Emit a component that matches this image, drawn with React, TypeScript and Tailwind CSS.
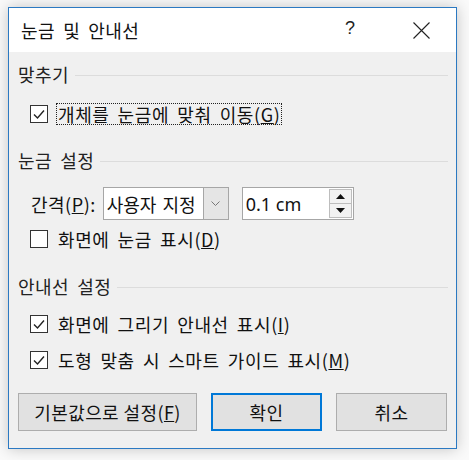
import React from "react";

const font = { fontFamily: '"Noto Sans CJK KR", "Noto Sans", sans-serif' };

function Check({ checked }: { checked: boolean }) {
  return (
    <div className="w-[18px] h-[18px] border border-[#333333] bg-white flex items-center justify-center shrink-0">
      {checked && (
        <svg width="14" height="14" viewBox="0 0 14 14">
          <path d="M2 7.5 L5.5 11 L12 3.5" fill="none" stroke="#222" strokeWidth="1.4" />
        </svg>
      )}
    </div>
  );
}

function Section({ title }: { title: string }) {
  return (
    <div className="flex items-center h-[24px] pl-[9px] pr-[8px]">
      <span className="text-[18px] text-[#222] whitespace-nowrap leading-none tracking-[0.5px]">{title}</span>
      <div className="flex-1 h-px bg-[#dcdcdc] ml-[6px] mt-[2px]" />
    </div>
  );
}

function CheckRow({ checked, text, acc, focus }: { checked: boolean; text: string; acc: string; focus?: boolean }) {
  return (
    <div className="flex items-center h-[24px] pl-[21px]">
      <Check checked={checked} />
      <span
        className={
          "ml-[8px] text-[18px] text-[#111] leading-none whitespace-nowrap tracking-[0.6px] px-[1px] py-[1px] " +
          (focus ? "border border-dotted border-[#222]" : "border border-transparent")
        }
      >
        {text}(<span className="underline">{acc}</span>)
      </span>
    </div>
  );
}

export default function App() {
  return (
    <div className="w-[469px] h-[460px] bg-[#fafafa] relative [word-spacing:3.5px]" style={font}>
      <div className="absolute left-[8px] top-[7px] w-[449px] h-[442px] border border-[#2b79c2] bg-[#f0f0f0] shadow-[0_0_14px_rgba(0,0,0,0.22)] flex flex-col">
        <div className="h-[44px] bg-white flex items-center relative shrink-0">
          <span className="ml-[12px] text-[18px] text-[#111] leading-none tracking-[0.5px]">눈금 및 안내선</span>
          <span className="absolute left-[336px] top-[11px] text-[18px] text-[#222] leading-none" style={{ fontFamily: '"Liberation Sans", sans-serif' }}>?</span>
          <svg className="absolute left-[404px] top-[14px]" width="17" height="17" viewBox="0 0 17 17">
            <path d="M0.5 0.5 L16.5 16.5 M16.5 0.5 L0.5 16.5" stroke="#222" strokeWidth="1.1" fill="none" />
          </svg>
        </div>
        <div className="mt-[10px]">
          <Section title="맞추기" />
        </div>
        <div className="mt-[16px]">
          <CheckRow checked text="개체를 눈금에 맞춰 이동" acc="G" focus />
        </div>
        <div className="mt-[22px]">
          <Section title="눈금 설정" />
        </div>
        <div className="mt-[15px] flex items-center h-[33px] pl-[22px]">
          <span className="text-[18px] text-[#111] leading-none whitespace-nowrap tracking-[0.5px]">
            간격(<span className="underline">P</span>):
          </span>
          <div className="ml-[7px] w-[126px] h-[33px] border border-[#a6a6a6] bg-white flex items-center">
            <span className="pl-[3px] text-[18px] text-[#111] leading-none whitespace-nowrap flex-1 [word-spacing:2px]">사용자 지정</span>
            <div className="w-[25px] h-full bg-[#e5e5e5] border-l border-[#a6a6a6] flex items-center justify-center shrink-0">
              <svg width="9" height="6" viewBox="0 0 9 6">
                <path d="M0.5 0.5 L4.5 4.5 L8.5 0.5" stroke="#777" strokeWidth="1" fill="none" />
              </svg>
            </div>
          </div>
          <div className="ml-[13px] w-[112px] h-[33px] border border-[#a6a6a6] bg-white flex items-center">
            <span className="pl-[3px] text-[18px] text-[#111] leading-none flex-1 [word-spacing:0px]" style={{ fontFamily: '"Noto Sans", sans-serif' }}>0.1 cm</span>
            <div className="w-[24px] h-full flex flex-col py-[1px] pr-[1px]">
              <div className="flex-1 border border-[#bdbdbd] bg-[#f2f2f2] flex items-center justify-center">
                <svg width="9" height="5" viewBox="0 0 9 5"><path d="M0 5 L4.5 0 L9 5 Z" fill="#111" /></svg>
              </div>
              <div className="flex-1 border border-[#bdbdbd] border-t-0 bg-[#f2f2f2] flex items-center justify-center">
                <svg width="9" height="5" viewBox="0 0 9 5"><path d="M0 0 L4.5 5 L9 0 Z" fill="#111" /></svg>
              </div>
            </div>
          </div>
        </div>
        <div className="mt-[7px]">
          <CheckRow checked={false} text="화면에 눈금 표시" acc="D" />
        </div>
        <div className="mt-[23px]">
          <Section title="안내선 설정" />
        </div>
        <div className="mt-[14px]">
          <CheckRow checked text="화면에 그리기 안내선 표시" acc="I" />
        </div>
        <div className="mt-[12px]">
          <CheckRow checked text="도형 맞춤 시 스마트 가이드 표시" acc="M" />
        </div>
        <div className="mt-[21px] flex pl-[9px] h-[38px]">
          <button className="w-[179px] h-full bg-[#e1e1e1] border border-[#adadad] text-[18px] text-[#111] leading-none whitespace-nowrap tracking-[0.4px]">
            기본값으로 설정(<span className="underline">F</span>)
          </button>
          <button className="ml-[14px] w-[111px] h-full bg-[#e1e1e1] border-2 border-[#0078d7] text-[18px] text-[#111] leading-none tracking-[0.5px]">
            확인
          </button>
          <button className="ml-[14px] w-[111px] h-full bg-[#e1e1e1] border border-[#adadad] text-[18px] text-[#111] leading-none tracking-[0.5px]">
            취소
          </button>
        </div>
      </div>
    </div>
  );
}
